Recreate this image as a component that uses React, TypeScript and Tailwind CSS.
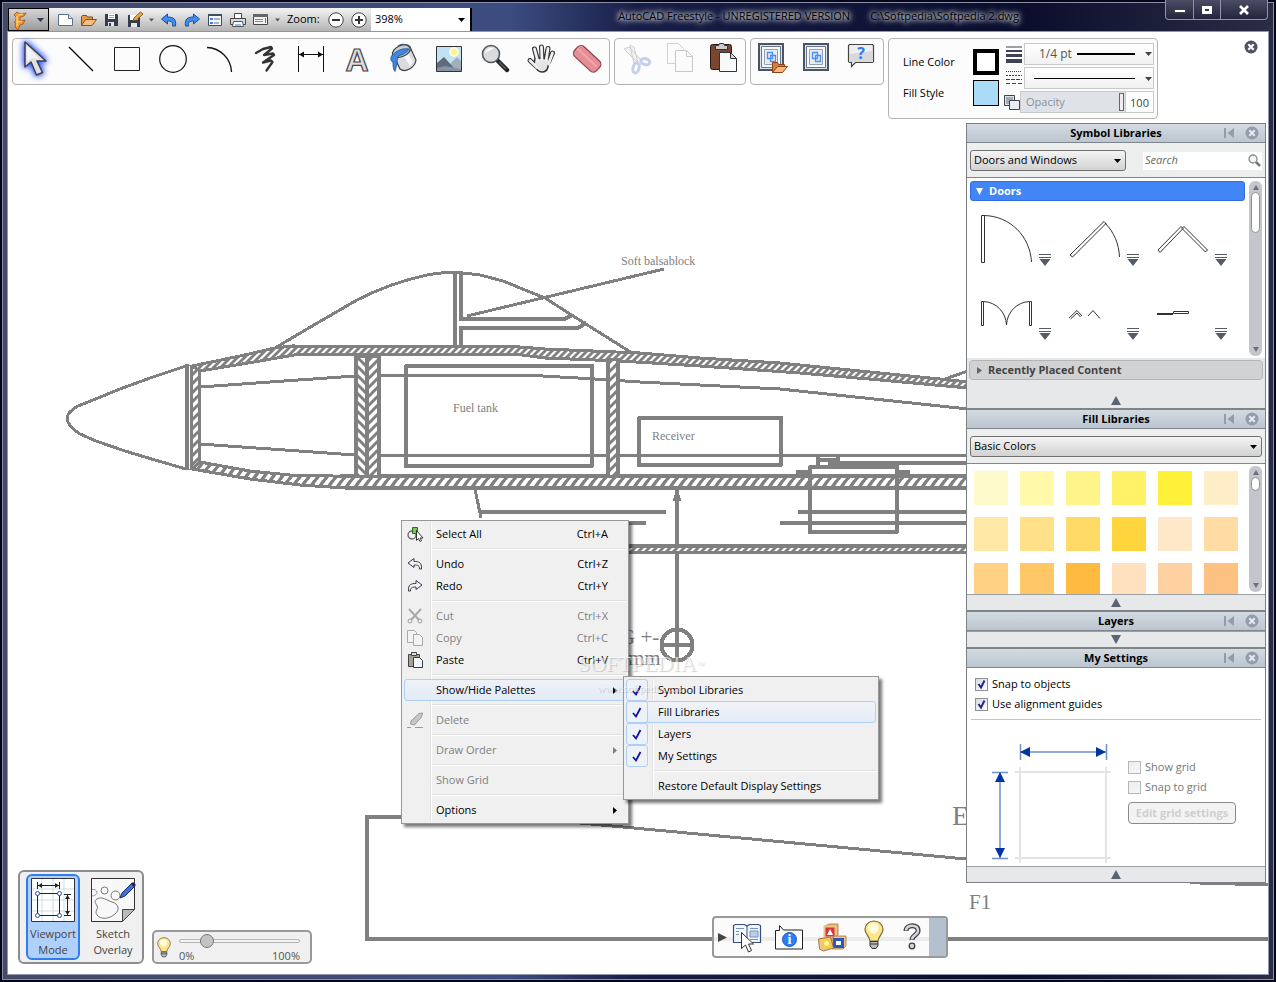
import type { ReactNode } from 'react';

const GRAY = '#808080';

type IconProps = { children: ReactNode; w?: number; h?: number };

function Svg({ children, w = 36, h = 36 }: IconProps) {
  return (
    <svg width={w} height={h} viewBox={`0 0 ${w} ${h}`} fill="none" className="shrink-0 overflow-visible" aria-hidden="true">
      {children}
    </svg>
  );
}

function Caret({ className = 'text-black' }: { className?: string }) {
  return (
    <svg width="7" height="4" viewBox="0 0 7 4" className={className} aria-hidden="true">
      <path d="M0 0h7L3.5 4z" fill="currentColor" />
    </svg>
  );
}

/* ---------- Quick access icons ---------- */

const quickIcons = {
  New: (
    <Svg w={18} h={16}>
      <path d="M1.500 2.500h10l4 4v7h-14z" fill="#fff" stroke="#5b6f88" />
      <path d="M11.500 2.500v4h4" stroke="#5b6f88" fill="#dfe8f2" />
    </Svg>
  ),
  Open: (
    <Svg w={18} h={16}>
      <path d="M1.500 13.500v-9l1-1h4l1 1.500h5v3" fill="#e79a4b" stroke="#7a4a2c" />
      <path d="M1.500 13.500l4-6h11l-4.500 6z" fill="#f6bd83" stroke="#8a4f26" />
    </Svg>
  ),
  Save: (
    <Svg w={18} h={16}>
      <path d="M2 2h12l1 1v11H2z" fill="#333d4c" />
      <path d="M5 2h7v5H5z" fill="#fff" />
      <path d="M6 3.500h5M6 5.500h5" stroke="#98a4b3" />
      <path d="M5 10h6v4H5z" fill="#e6eaf0" />
      <path d="M6 11h2v3H6z" fill="#333d4c" />
    </Svg>
  ),
  'Save As': (
    <Svg w={18} h={16}>
      <path d="M2 3h12v12H2z" fill="#333d4c" />
      <path d="M4 3h8v5H4z" fill="#fff" />
      <path d="M5 11h6v4H5z" fill="#e6eaf0" />
      <path d="M7 9l1-3 6.500-6L17 2l-6.500 6z" fill="#f3a83c" stroke="#5e4423" strokeWidth=".8" />
    </Svg>
  ),
  Undo: (
    <Svg w={18} h={16}>
      <path d="M1.500 7l6-5v3c6 0 9 2 8 9h-3c.5-4-1-5-5-5v3z" fill="#3f8df0" stroke="#1f4e9b" strokeLinejoin="round" />
    </Svg>
  ),
  Redo: (
    <Svg w={18} h={16}>
      <path d="M16.500 7l-6-5v3c-6 0-9 2-8 9h3c-.5-4 1-5 5-5v3z" fill="#3f8df0" stroke="#1f4e9b" strokeLinejoin="round" />
    </Svg>
  ),
  Properties: (
    <Svg w={18} h={16}>
      <path d="M2.500 2.500h13v11h-13z" fill="#f4f7fa" stroke="#3d4d61" />
      <path d="M2 2h14v2H2z" fill="#3d4d61" />
      <path d="M4 6h3v2H4zM4 10h3v2H4z" fill="#3f7fe0" />
      <path d="M8 7h6M8 11h5" stroke="#5f7085" />
    </Svg>
  ),
  Print: (
    <Svg w={18} h={16}>
      <path d="M5.500 1.500h7v5h-7z" fill="#fff" stroke="#444" />
      <path d="M1.500 6.500h15v6h-15z" fill="#d8dadd" stroke="#444" />
      <path d="M4.500 9.500h9l1 5h-11z" fill="#fff" stroke="#555" />
      <path d="M6 12h6v2H6z" fill="#8fc1f3" />
    </Svg>
  ),
  Layout: (
    <Svg w={18} h={16}>
      <path d="M1.500 2.500h14v10h-14z" fill="#f0f1f2" stroke="#444" />
      <path d="M1 2h15v3H1z" fill="#666" />
      <path d="M3 7.500h8M3 9.500h8" stroke="#8a8a8a" />
      <path d="M13 6h1v5h-1z" fill="#777" />
    </Svg>
  ),
};

/* ---------- Drawing tool icons ---------- */

const drawTools: { name: string; icon: ReactNode }[] = [
  {
    name: 'Select',
    icon: (
      <Svg>
        <g className="[filter:drop-shadow(0_0_3px_#2f55ff)_drop-shadow(0_0_2px_#6f8cff)]">
          <path d="M8 1v25l6-5 5.500 13 6-2.500L20 20h9z" fill="#dfe0e5" stroke="#3d3f4a" strokeWidth="1.500" strokeLinejoin="round" />
        </g>
        <path d="M10 5v16l5-4 7 1z" fill="#f4f4f7" />
      </Svg>
    ),
  },
  { name: 'Line', icon: <Svg><path d="M6 6l24 24" stroke="#000" strokeWidth="1.300" /></Svg> },
  { name: 'Rectangle', icon: <Svg><path d="M5.500 6.500h25v23h-25z" stroke="#222" /></Svg> },
  { name: 'Circle', icon: <Svg><circle cx="18" cy="18" r="13.300" stroke="#111" strokeWidth="1.200" /></Svg> },
  { name: 'Arc', icon: <Svg><path d="M6 6.500C19 7 30 17 30.500 31" stroke="#111" strokeWidth="1.300" /></Svg> },
  {
    name: 'Freehand',
    icon: (
      <Svg>
        <path d="M9 12L16 8 24 6 25 7.500 17 14 26 12.500 27 14 16 21.500 24 19.500 25.500 21 19.500 29.500" stroke="#333" strokeWidth="2.400" strokeLinecap="round" strokeLinejoin="round" />
      </Svg>
    ),
  },
  {
    name: 'Dimension',
    icon: (
      <Svg>
        <path d="M5.500 5v26M30.500 5v26M6 13.500h24" stroke="#111" />
        <path d="M6 13.500l5-3v6zM30 13.500l-5-3v6z" fill="#111" />
      </Svg>
    ),
  },
  {
    name: 'Text',
    icon: (
      <Svg>
        <text x="18" y="29.500" textAnchor="middle" className="font-['Liberation_Sans',sans-serif] text-[32px] font-bold" fill="#dcdcdf" stroke="#454548" strokeWidth="1.200">
          A
        </text>
      </Svg>
    ),
  },
  {
    name: 'Fill',
    icon: (
      <Svg>
        <path d="M8 13l7 15c5 4 15-1 16-9L25 6z" fill="#d9dbdf" stroke="#3b3b40" strokeWidth="1.200" />
        <path d="M22 11l6 10-3 4-7-11z" fill="#f8f8fa" />
        <ellipse cx="16.500" cy="10" rx="9.500" ry="5.500" transform="rotate(-24 16.500 10)" fill="#c3cedc" stroke="#3b3b40" strokeWidth="1.200" />
        <path d="M8.500 13c4-4 10-6 15.500-5-2 4-7 6-11 7-1 4-1 10-3 15.500-2-2-2-6-2-9-3-2-3-6 .5-8.500z" fill="#3f86dc" stroke="#1f4f96" strokeWidth=".8" />
        <path d="M13 5c4-3 11-2 13 4" stroke="#55565a" strokeWidth="1.200" />
      </Svg>
    ),
  },
  {
    name: 'Image',
    icon: (
      <Svg>
        <path d="M5.500 5.500h25v25h-25z" fill="#bfe3f2" stroke="#333" />
        <circle cx="23" cy="11" r="5" fill="#fdfbd8" />
        <circle cx="23" cy="11" r="3" fill="#fff38f" />
        <path d="M20 22l6-6 4 4v10H17z" fill="#a3aebb" />
        <path d="M6 22l7-6 10 11v3H6z" fill="#5f6b7b" />
        <path d="M6 27l8-2 16 3v2H6z" fill="#8793a3" />
      </Svg>
    ),
  },
  {
    name: 'Zoom',
    icon: (
      <Svg>
        <path d="M21 20l9 9" stroke="#222" strokeWidth="4.500" strokeLinecap="round" />
        <path d="M22 21l7 7" stroke="#5b6068" strokeWidth="1.500" />
        <circle cx="14" cy="13" r="8.500" fill="#d9dcdf" stroke="#55585d" strokeWidth="1.600" />
        <path d="M8 12c1-4 5-6 9-5-2 1-6 3-9 5z" fill="#fff" />
      </Svg>
    ),
  },
  {
    name: 'Pan',
    icon: (
      <Svg>
        <g strokeLinecap="round" strokeLinejoin="round">
          <path d="M11.500 8l3 11M18.500 6l.5 12M25 7.500l-2 11M29.500 12l-4 9M7 19.500l6 5.500" stroke="#333" strokeWidth="5" />
          <path d="M12 17l14 1-1 8c-1 4-3 5-6 5-4 0-6-3-8-7z" fill="#e4e4e8" stroke="#333" strokeWidth="1.500" />
          <path d="M11.500 8l3.500 13M18.500 6l.5 14M25 7.500l-2 13M29.500 12l-4 11M7 19.500l7 7" stroke="#f0f0f2" strokeWidth="2.800" />
          <path d="M15 20h9l-1 6-5 2-4-3z" fill="#e4e4e8" />
        </g>
      </Svg>
    ),
  },
  {
    name: 'Eraser',
    icon: (
      <Svg>
        <rect x="3" y="11" width="30" height="13.500" rx="4.500" transform="rotate(43 18 18)" fill="#e68e96" stroke="#8d3f49" strokeWidth="1.200" />
        <path d="M9 8l18 17" stroke="#efa6ac" strokeWidth="2" strokeLinecap="round" />
      </Svg>
    ),
  },
];

const clipboardTools: { name: string; icon: ReactNode; disabled?: boolean }[] = [
  {
    name: 'Cut',
    disabled: true,
    icon: (
      <Svg>
        <path d="M6 8l5-2 14 15-3 3zM12 4l4 2 4 16-4 1z" fill="#f2f2f3" stroke="#cfcfd2" />
        <g stroke="#c3d0ec" strokeWidth="3" fill="#fff">
          <ellipse cx="18" cy="27" rx="3" ry="5" transform="rotate(15 18 27)" />
          <ellipse cx="27.500" cy="20.500" rx="4.500" ry="3" transform="rotate(15 27 20)" />
        </g>
      </Svg>
    ),
  },
  {
    name: 'Copy',
    disabled: true,
    icon: (
      <Svg>
        <path d="M5.500 2.500h11l5 5v15h-16z" fill="#fbfbfb" stroke="#d0d0d2" />
        <path d="M13.500 9.500h11l6 6v15h-17z" fill="#fbfbfb" stroke="#c8c8ca" />
        <path d="M24.500 9.500v6h6" stroke="#c8c8ca" />
      </Svg>
    ),
  },
  {
    name: 'Paste',
    icon: (
      <Svg>
        <rect x="4.500" y="3.500" width="21" height="25" rx="2" fill="#7a4630" stroke="#2d1a12" />
        <path d="M9.500 8.500v-4h3l1-2h4l1 2h3v4z" fill="#c9ccd0" stroke="#333" />
        <path d="M13.500 11.500h11l6 6v13h-17z" fill="#f8f9fb" stroke="#333" />
        <path d="M24.500 11.500v6h6z" fill="#d3d8e0" stroke="#333" />
      </Svg>
    ),
  },
];

function FrameArt() {
  return (
    <>
      <path d="M5 2h26v28H5z" fill="#4b5462" />
      <path d="M7 4h22v24H7z" fill="#dde3ea" />
      <path d="M8.500 5.500h19v21h-19z" fill="#f5f7f9" stroke="#69788c" />
      <path d="M11.500 8.500h13v15h-13z" fill="#e9edf3" stroke="#93a0b2" />
      <path d="M14.500 11.500h5v6h-5zM17.500 14.500h5v6h-5z" stroke="#4a8df5" strokeWidth="1.300" />
    </>
  );
}

const shareTools: { name: string; icon: ReactNode }[] = [
  {
    name: 'Open from gallery',
    icon: (
      <Svg>
        <FrameArt />
        <path d="M19.500 31.500v-10h5l1 2h6v3" fill="#d97f35" stroke="#8a431b" />
        <path d="M19.500 31.500l5-6h10l-5 6z" fill="#f7b77b" stroke="#8a431b" />
      </Svg>
    ),
  },
  { name: 'Gallery', icon: <Svg><FrameArt /></Svg> },
  {
    name: 'Help',
    icon: (
      <Svg>
        <path d="M6.500 3.500h23l1 1v16l-1 1h-17l-4 4v-4h-2l-1-1v-16z" fill="#eeeef2" stroke="#444" strokeWidth="1.200" />
        <path d="M6 13l24-3v11H6z" fill="#d7d7de" />
        <text x="18" y="18" textAnchor="middle" className="font-['Open_Sans',sans-serif] text-[16px] font-bold" fill="#2f7df0">
          ?
        </text>
      </Svg>
    ),
  },
];

/* ---------- Title bar ---------- */

function QuickButton({ name }: { name: keyof typeof quickIcons }) {
  return (
    <button type="button" aria-label={name} className="flex h-full w-[23px] items-center justify-center">
      {quickIcons[name]}
    </button>
  );
}

function TitleBar() {
  return (
    <header className="flex h-8 items-end">
      {/* Quick access */}
      <div className="flex h-6 w-[464px] items-center border-r-2 border-b border-black bg-linear-to-b from-[#f4f4f4] to-[#b4b4b4]">
        <button type="button" aria-label="Application menu" className="mr-[5px] flex h-full w-[41px] items-center justify-between border border-black bg-linear-to-b from-[#d5d5d5] to-[#9c9c9c] pr-1 pl-1">
          <Svg w={16} h={20}>
            <path d="M1 5l3-3 3 2 6-1-2 3-4 1v4l5-1-2 4-3 1-2 5-3-3 1-4-2-1 2-2V7z" fill="#f39a2d" stroke="#a84b12" strokeWidth=".8" />
            <path d="M5 5l5-1M5 12l4-1M4 6v10" stroke="#ffe08a" strokeWidth="1.200" />
          </Svg>
          <Caret className="text-[#333f4f]" />
        </button>
        <QuickButton name="New" />
        <QuickButton name="Open" />
        <QuickButton name="Save" />
        <QuickButton name="Save As" />
        <button type="button" aria-label="Save options" className="flex h-full w-[11px] items-center justify-center">
          <Caret className="w-[5px] text-[#555]" />
        </button>
        <QuickButton name="Undo" />
        <QuickButton name="Redo" />
        <QuickButton name="Properties" />
        <QuickButton name="Print" />
        <QuickButton name="Layout" />
        <button type="button" aria-label="Customize" className="flex h-full w-[11px] items-center justify-center">
          <Caret className="w-[5px] text-[#555]" />
        </button>
        <label htmlFor="zoom" className="ml-1 w-[37px]">
          Zoom:
        </label>
        <button type="button" aria-label="Zoom out" className="flex w-[23px] justify-center">
          <Svg w={16} h={16}>
            <circle cx="8" cy="8" r="7.200" fill="#fbfbfb" stroke="#444" />
            <path d="M4 8h8" stroke="#333" strokeWidth="2" />
          </Svg>
        </button>
        <button type="button" aria-label="Zoom in" className="flex w-[23px] justify-center">
          <Svg w={16} h={16}>
            <circle cx="8" cy="8" r="7.200" fill="#fbfbfb" stroke="#444" />
            <path d="M4 8h8M8 4v8" stroke="#333" strokeWidth="2" />
          </Svg>
        </button>
        <div className="relative ml-px h-full flex-1">
          <select id="zoom" className="h-full w-full appearance-none bg-white px-1">
            <option>398%</option>
          </select>
          <Caret className="pointer-events-none absolute top-2.5 right-[5px] text-black" />
        </div>
      </div>
      {/* Title */}
      <h1 className="flex h-8 flex-1 items-center justify-center gap-5 whitespace-pre [text-shadow:0_0_4px_#ffffff,0_0_6px_#ffffffc0,0_0_10px_#ffffffa0]">
        <span>AutoCAD Freestyle - UNREGISTERED VERSION</span>
        <span>C:\Softpedia\Softpedia 2.dwg</span>
      </h1>
      {/* Window controls */}
      <div className="flex h-5 self-start rounded-b border border-t-0 border-[#8f94a8] bg-linear-to-b from-[#4a4d63] to-[#22253b]">
        <button type="button" aria-label="Minimize" className="flex w-7 items-center justify-center border-r border-[#8f94a8]">
          <Svg w={12} h={6}>
            <path d="M.5 2.500h11v3H.5z" fill="#fff" stroke="#444" />
          </Svg>
        </button>
        <button type="button" aria-label="Maximize" className="flex w-[27px] items-center justify-center border-r border-[#8f94a8]">
          <Svg w={12} h={10}>
            <path d="M2.500 2.500h7v5h-7z" stroke="#fff" strokeWidth="3" />
          </Svg>
        </button>
        <button type="button" aria-label="Close" className="flex w-[46px] items-center justify-center">
          <Svg w={12} h={10}>
            <path d="M2 1l8 8M10 1L2 9" stroke="#fff" strokeWidth="2.600" />
          </Svg>
        </button>
      </div>
    </header>
  );
}

/* ---------- Toolbars ---------- */

function ToolPanel({ tools, className }: { tools: { name: string; icon: ReactNode; disabled?: boolean }[]; className: string }) {
  return (
    <div className={`flex h-[47px] justify-between rounded border border-[#b3b3b3] bg-[#fcfcfc] pt-0.5 ${className}`}>
      {tools.map((tool) => (
        <button key={tool.name} type="button" aria-label={tool.name} disabled={tool.disabled} className="flex w-9 items-start">
          {tool.icon}
        </button>
      ))}
    </div>
  );
}

function StylePanel() {
  return (
    <div className="flex h-[81px] w-[270px] rounded border border-[#b3b3b3] bg-[#fcfcfc] pr-[3px] pl-3.5">
      {/* Labels */}
      <div className="flex w-[70px] flex-col justify-center gap-[15px] pb-0.5">
        <span id="line-color">Line Color</span>
        <span id="fill-style">Fill Style</span>
      </div>
      {/* Swatches */}
      <div className="flex w-8 flex-col gap-[5px] pt-2.5">
        <button type="button" aria-labelledby="line-color" className="size-[26px] border-4 border-black bg-white" />
        <button type="button" aria-labelledby="fill-style" className="size-[26px] border border-black bg-[#abdcf7]" />
      </div>
      {/* Stroke settings */}
      <div className="flex flex-1 flex-col gap-0.5 pt-1">
        <div className="flex items-center gap-0.5">
          <Svg w={17} h={18}>
            <path d="M1 2h16" stroke="#3d4350" />
            <path d="M1 6h16" stroke="#3d4350" strokeWidth="2" />
            <path d="M1 10.500h16" stroke="#3d4350" strokeWidth="3" />
            <path d="M1 16h16" stroke="#3d4350" strokeWidth="4" />
          </Svg>
          <div className="relative flex-1">
            <select aria-label="Line weight" className="block h-[22px] w-full appearance-none border border-[#c9c9c9] bg-linear-to-b from-white to-[#f1f1f1] px-3.5 text-xs text-[#555]">
              <option>1/4 pt</option>
            </select>
            <span className="pointer-events-none absolute top-2.5 right-[19px] h-0.5 w-[58px] bg-black" />
            <Caret className="pointer-events-none absolute top-[9px] right-0.5 text-[#444]" />
          </div>
        </div>
        <div className="flex items-center gap-0.5">
          <Svg w={17} h={18}>
            <path d="M1 2.500h16" stroke="#3d4350" strokeDasharray="1 1" />
            <path d="M1 6.500h16" stroke="#3d4350" strokeDasharray="2 1" />
            <path d="M1 10.500h16" stroke="#3d4350" strokeDasharray="4 1" />
            <path d="M1 14.500h16" stroke="#3d4350" strokeDasharray="4 2" />
          </Svg>
          <div className="relative flex-1">
            <select aria-label="Line type" className="block h-[22px] w-full appearance-none border border-[#c9c9c9] bg-linear-to-b from-white to-[#f1f1f1]">
              <option aria-label="Solid" />
            </select>
            <span className="pointer-events-none absolute top-[11px] right-[19px] h-px w-[101px] bg-black" />
            <Caret className="pointer-events-none absolute top-2.5 right-0.5 text-[#444]" />
          </div>
        </div>
        <div className="flex items-center">
          <Svg w={15} h={18}>
            <path d="M-.5 2.500h10v10h-10z" fill="#dfe3e8" stroke="#3d4350" />
            <path d="M1 4h7v7H1z" fill="#a3abb5" />
            <path d="M4.500 7.500h10v9h-10z" fill="#e9eef4" stroke="#3d4350" />
          </Svg>
          <button type="button" className="flex h-[22px] flex-1 items-center justify-between border border-[#c9c9c9] bg-[#dfe3e8] pl-[5px] text-[#8b9098]">
            Opacity
            <span className="mr-px h-[18px] w-[5px] border border-[#666] bg-[#eee]" />
          </button>
          <input aria-label="Opacity value" defaultValue="100" className="h-[22px] w-7 border border-l-0 border-[#c9c9c9] bg-white text-center text-[#444]" />
        </div>
      </div>
    </div>
  );
}

/* ---------- Drawing ---------- */

const upperSkin =
  'M192 366L240 356 275 348 292 346 520 347 545 349 640 353 700 358 780 363 860 371 950 380 968 382V388L880 380 800 373 700 366 620 361 545 358 515 354H300L260 361 200 371z';
const lowerSkin = 'M200 462L250 471 290 475 333 476H968V488H345L300 485 250 479 192 469z';

function Drawing() {
  return (
    <svg className="pointer-events-none absolute inset-0 h-full w-full" aria-hidden="true">
      <defs>
        <pattern id="hatch-fine" width="7" height="7" patternUnits="userSpaceOnUse">
          <rect width="7" height="7" fill="#fff" />
          <path d="M-2 9L9 -2M-2 2L2 -2M5 9L9 5" stroke={GRAY} strokeWidth="2.800" />
        </pattern>
        <pattern id="hatch-post" width="9" height="9" patternUnits="userSpaceOnUse">
          <rect width="9" height="9" fill="#fff" />
          <path d="M-2 11L11 -2M-2 2L2 -2M7 11L11 7" stroke={GRAY} strokeWidth="3" />
        </pattern>
        <pattern id="hatch-back" width="9" height="9" patternUnits="userSpaceOnUse">
          <rect width="9" height="9" fill="#fff" />
          <path d="M-2 -2L11 11M-2 7L2 11M7 -2L11 2" stroke={GRAY} strokeWidth="3" />
        </pattern>
        <pattern id="hatch-wide" width="9" height="12" patternUnits="userSpaceOnUse">
          <rect width="9" height="12" fill="#fff" />
          <path d="M-9 13L1 -1M0 13L10 -1M9 13L19 -1" stroke={GRAY} strokeWidth="3.400" />
        </pattern>
      </defs>
      <g transform="translate(-8 -32)" stroke={GRAY} strokeWidth="3" fill="none" shapeRendering="crispEdges">
        {/* Nose cone */}
        <path d="M186 366L150 378 120 389 98 398 78 406Q67 412 67 419 68 426 80 434L96 441 125 451 155 460 186 469" />
        <path d="M186.500 364v106" strokeWidth="4" />
        <path d="M191.500 366h7.500v102h-7.500z" fill="url(#hatch-post)" />
        {/* Skins */}
        <path d={upperSkin} fill="url(#hatch-fine)" />
        <path d={lowerSkin} fill="url(#hatch-wide)" />
        <path d="M340 476H968M345 488H968" strokeWidth="4" />
        {/* Longerons */}
        <path d="M200 387L355 376M367 375H525L560 377 595 379 640 382 780 389 968 409M200 444L355 455M367 455H968" />
        {/* Bulkheads */}
        <path d="M356 356h11v120h-11z" fill="url(#hatch-back)" />
        <path d="M367 356h12v120h-12z" fill="url(#hatch-post)" />
        <path d="M608 359h10v117h-10z" fill="url(#hatch-post)" />
        <path d="M356 356v120M367 356v120M379 356v120M608 358v118M618 358v118" strokeWidth="4" />
        {/* Canopy */}
        <path d="M275 348L307 329 357 300Q390 283 427 275 450 270 480 275L503 281 530 292 545 298 570 314 632 353" />
        <path d="M454.500 272v76M460.500 273v46h104l8-4M460.500 348v-20h117l9-5" strokeWidth="4" />
        <path d="M467 316L664 269" />
        <path d="M945 379L968 371" />
        {/* Boxes */}
        <g strokeWidth="4">
          <path d="M406 366h186v100H406zM639 418h142v47H639zM810 467h87v65h-87z" strokeLinejoin="round" />
          <path d="M828 463h140M818 457v10M818 460h22M838 457v6M796 472h14M898 472h12" />
          {/* Gear and wing lines */}
          <path d="M480 512h186M798 512h170M560 523h86M780 523h188M677 489v173M660 645h34" />
          <circle cx="677" cy="645" r="15.500" />
          {/* Tail template */}
          <path d="M402 817h-35v122H1270" />
        </g>
        <path d="M475 489L481 518M677 493L674 501M677 493L680 501" />
        <path d="M580 823L966 859 1200 883 1270 885" />
        <path d="M560 549H968" strokeWidth="10" />
        <path d="M626 548h342v3H626z" fill="url(#hatch-fine)" stroke="none" />
      </g>
      <g fill={GRAY} transform="translate(-8 -32)" className="font-['Liberation_Serif',serif]">
        <g className="text-xs">
          <text x="621" y="265">Soft balsablock</text>
          <text x="453" y="412">Fuel tank</text>
          <text x="652" y="440">Receiver</text>
        </g>
        <g className="text-[21px]">
          <text x="620" y="644">G +-</text>
          <text x="628" y="665">mm</text>
          <text x="969" y="909">F1</text>
        </g>
        <text x="952" y="825" className="text-[28px]">E</text>
      </g>
    </svg>
  );
}

/* ---------- Palettes ---------- */

function CloseDot({ color, cross }: { color: string; cross: string }) {
  return (
    <Svg w={14} h={14}>
      <circle cx="7" cy="7" r="6.500" fill={color} />
      <path d="M4.300 4.300l5.400 5.400M9.700 4.300L4.300 9.700" stroke={cross} strokeWidth="2.200" />
    </Svg>
  );
}

function PaletteHeader({ title }: { title: string }) {
  return (
    <div className="relative flex h-[19px] items-center justify-center border-b border-[#7f868d] bg-linear-to-b from-[#d3dae2] to-[#bcc6d0]">
      <h2 className="font-bold text-black">{title}</h2>
      <div className="absolute right-1.5 flex items-center gap-[11px]">
        <button type="button" aria-label={`Collapse ${title}`}>
          <Svg w={10} h={10}>
            <path d="M0 0h2v10H0zM10 0v10L3.500 5z" fill="#949cac" />
          </Svg>
        </button>
        <button type="button" aria-label={`Close ${title}`}>
          <CloseDot color="#949cac" cross="#e3e8ed" />
        </button>
      </div>
    </div>
  );
}

function PaletteFooter({ open = true, label }: { open?: boolean; label: string }) {
  return (
    <button type="button" aria-label={label} className="flex h-4 w-full items-center justify-center border-t border-[#9aa0a6] bg-[#e6e8ea]">
      <Svg w={10} h={9}>
        <path d={open ? 'M5 0l5 9H0z' : 'M5 9l5-9H0z'} fill="#5c6373" />
      </Svg>
    </button>
  );
}

function Scrollbar({ thumb }: { thumb: string }) {
  return (
    <div className="flex w-[13px] flex-col items-center rounded-md bg-[#c5c6cc] py-1">
      <Svg w={6} h={5}>
        <path d="M3 0l3 5H0z" fill="#6b7080" />
      </Svg>
      <div className={`mt-0.5 w-[9px] rounded-md border border-[#8b8e9a] bg-white ${thumb}`} />
      <div className="mt-auto">
        <Svg w={6} h={5}>
          <path d="M3 5l3-5H0z" fill="#6b7080" />
        </Svg>
      </div>
    </div>
  );
}

function PaletteSelect({ label, value, className }: { label: string; value: string; className: string }) {
  return (
    <div className={`relative ${className}`}>
      <select aria-label={label} className="block h-[21px] w-full appearance-none rounded-[3px] border border-[#707070] bg-linear-to-b from-[#f4f4f4] to-[#d2d2d2] px-[3px]">
        <option>{value}</option>
      </select>
      <Caret className="pointer-events-none absolute top-[9px] right-[5px] text-black" />
    </div>
  );
}

const doors: { name: string; art: ReactNode }[] = [
  { name: 'Single door', art: <><path d="M5.500 13.500h3v47h-3z" /><path d="M8 13.500C34 14 54 34 55.500 60" /></> },
  { name: 'Single door 45', art: <><path d="M6 53L40 19.500l2 2L8.500 55z" /><path d="M41 21C50 30 55 42 55.500 55" /></> },
  { name: 'Bifold door', art: <path d="M6 48L29 24.500l2 2L8 50.500zM30 26.500L32 24.500 55.500 48l-2 2z" /> },
  { name: 'Double door', art: <path d="M5.500 25.500h2v24h-2zM53.500 25.500h2v24h-2zM7.500 25.500C20 26 30 36 30.500 49 31 36 41 26 53.500 25.500" /> },
  { name: 'Double bifold door', art: <path d="M5 42l8-7.500 5 5.500M6.500 43l6.500-6 3.500 4M24 40l5-5.500 7 8" /> },
  { name: 'Sliding door', art: <><path d="M5 38h16" strokeWidth="2" /><path d="M21.500 35.500h15v2h-15z" /></> },
];

function SymbolLibraries() {
  return (
    <section>
      <PaletteHeader title="Symbol Libraries" />
      <div className="flex h-[35px] items-center justify-between border-b border-[#7f868d] bg-[#edefef] px-[3px] pt-px">
        <PaletteSelect label="Symbol library" value="Doors and Windows" className="w-[156px]" />
        <div className="flex h-[18px] w-[119px] items-center bg-white pr-px">
          <input type="search" aria-label="Search" placeholder="Search" className="w-full min-w-0 pl-0.5 italic outline-none placeholder:text-[#666]" />
          <Svg w={13} h={13}>
            <circle cx="5" cy="5" r="4" stroke="#8b8b8b" strokeWidth="1.300" fill="#f4f4f4" />
            <path d="M8 8l4 4" stroke="#777" strokeWidth="2.500" />
          </Svg>
        </div>
      </div>
      <div className="flex h-[180px] justify-between bg-white pt-[3px] pr-[3px] pb-0.5 pl-[3px]">
        <div>
          <button type="button" className="flex h-5 w-[275px] items-center gap-1.5 rounded-[3px] border border-[#2f6de0] bg-[#4285f6] px-[5px] font-bold text-white">
            <svg width="7" height="7" viewBox="0 0 7 7" aria-hidden="true">
              <path d="M0 0h7L3.500 7z" fill="#fff" />
            </svg>
            Doors
          </button>
          <div className="grid grid-cols-[repeat(3,88px)] pt-px pl-1.5">
            {doors.map((door) => (
              <button key={door.name} type="button" aria-label={door.name} className="h-[74px]">
                <Svg w={80} h={74}>
                  <g stroke="#333">{door.art}</g>
                  <path d="M63 52h12v1H63zM63 55h12v1H63zM63.500 57h11L69 64z" fill="#555a68" />
                </Svg>
              </button>
            ))}
          </div>
        </div>
        <Scrollbar thumb="h-[41px]" />
      </div>
      <div className="flex h-[50px] flex-col items-center justify-between bg-[#e6e8ea] px-0.5 pt-0.5">
        <button type="button" className="flex h-5 w-full items-center gap-1.5 rounded border border-[#b5b5b5] bg-[#d1d2d3] px-[7px] font-bold text-[#444]">
          <Svg w={5} h={7}>
            <path d="M0 0l5 3.500L0 7z" fill="#666" />
          </Svg>
          Recently Placed Content
        </button>
        <button type="button" aria-label="Collapse symbols" className="mb-[3px]">
          <Svg w={10} h={9}>
            <path d="M5 0l5 9H0z" fill="#5c6373" />
          </Svg>
        </button>
      </div>
    </section>
  );
}

const swatches = [
  'bg-[#fffacb]', 'bg-[#fff9a9]', 'bg-[#fff48a]', 'bg-[#fff268]', 'bg-[#fff13a]', 'bg-[#ffeec8]',
  'bg-[#ffe8a6]', 'bg-[#ffe18a]', 'bg-[#ffda66]', 'bg-[#ffd43c]', 'bg-[#ffe8c8]', 'bg-[#ffdca3]',
  'bg-[#ffd184]', 'bg-[#ffc766]', 'bg-[#febb40]', 'bg-[#ffe0bf]', 'bg-[#ffd0a0]', 'bg-[#fdc282]',
];

function FillLibraries() {
  return (
    <section className="border-t-2 border-[#808489]">
      <PaletteHeader title="Fill Libraries" />
      <div className="flex h-[35px] items-center border-b border-[#7f868d] bg-[#edefef] px-[3px]">
        <PaletteSelect label="Fill library" value="Basic Colors" className="w-full" />
      </div>
      <div className="flex h-[130px] justify-between bg-white pr-[3px] pl-[7px]">
        <div className="grid grid-cols-6 content-start gap-3 overflow-hidden pt-[7px]">
          {swatches.map((color, index) => (
            <button key={color} type="button" aria-label={`Color ${index + 1}`} className={`size-[34px] ${color}`} />
          ))}
        </div>
        <div className="flex py-0.5">
          <Scrollbar thumb="h-[14px]" />
        </div>
      </div>
      <PaletteFooter label="Collapse fills" />
    </section>
  );
}

function CheckRow({ id, label, checked = false, disabled = false }: { id: string; label: string; checked?: boolean; disabled?: boolean }) {
  return (
    <div className={`flex h-5 items-center gap-1 ${disabled ? 'text-[#777]' : ''}`}>
      <span className="relative flex">
        <input id={id} type="checkbox" defaultChecked={checked} disabled={disabled} className="peer size-[13px] appearance-none border border-[#8e8f8f] bg-linear-to-br from-[#d8dbe0] to-white disabled:border-[#b5b8bb] disabled:from-[#eeeeee] disabled:to-[#f6f6f6]" />
        <svg width="13" height="13" viewBox="0 0 13 13" fill="none" className="pointer-events-none invisible absolute inset-0 peer-checked:visible" aria-hidden="true">
          <path d="M3.500 6l2.500 3.500L9.500 2.500" stroke="#1f2a8c" strokeWidth="2" />
        </svg>
      </span>
      <label htmlFor={id}>{label}</label>
    </div>
  );
}

function MySettings() {
  return (
    <section className="border-t-2 border-[#808489] bg-white">
      <PaletteHeader title="My Settings" />
      <div className="px-1">
        <div className="flex h-[52px] flex-col border-b border-[#c4c4c4] px-1 pt-1.5">
          <CheckRow id="snap-objects" label="Snap to objects" checked />
          <CheckRow id="snap-guides" label="Use alignment guides" checked />
        </div>
        <div className="flex h-[146px] pl-5">
          <svg width="137" height="146" viewBox="0 0 137 146" fill="none" className="shrink-0" aria-hidden="true">
            <path d="M29 47v96M115 47v96M24 52h96M24 138h96" stroke="#e4e4e4" strokeWidth="2" />
            <path d="M29.500 24v16M115.500 24v16M29 32h86M1 52.500h16M1 138.500h16M9 52v86" stroke="#6f8fce" strokeWidth="1.500" />
            <path d="M29 32l10-5v10zM115 32l-10-5v10zM9 52l-5 10h10zM9 138l-5-10h10z" fill="#0034a3" />
          </svg>
          <div className="flex flex-col items-start pt-[37px]">
            <CheckRow id="show-grid" label="Show grid" disabled />
            <CheckRow id="snap-grid" label="Snap to grid" disabled />
            <button type="button" disabled className="mt-[5px] h-[22px] w-[108px] rounded border border-[#8a8a8a] bg-[#f3f3f3] font-bold whitespace-nowrap text-[#cfcfcf]">
              Edit grid settings
            </button>
          </div>
        </div>
      </div>
      <PaletteFooter label="Collapse settings" />
    </section>
  );
}

function Palettes() {
  return (
    <aside className="absolute top-[91px] right-0.5 w-[300px] border border-[#7c8085]">
      <SymbolLibraries />
      <FillLibraries />
      <section className="border-t-2 border-[#808489]">
        <PaletteHeader title="Layers" />
        <PaletteFooter open={false} label="Expand layers" />
      </section>
      <MySettings />
    </aside>
  );
}

/* ---------- Context menu ---------- */

type MenuItem = { label: string; keys?: string; disabled?: boolean; sub?: boolean; active?: boolean; icon?: ReactNode };

const menuGroups: MenuItem[][] = [
  [
    {
      label: 'Select All',
      keys: 'Ctrl+A',
      icon: (
        <Svg w={16} h={16}>
          <circle cx="5" cy="9" r="4" stroke="#666" strokeWidth="1.300" />
          <path d="M5.500 1.500h5v6h-5z" fill="#7dc55b" stroke="#2e6b1c" />
          <path d="M9.500 4.500v10l2-2 1.500 3 1.500-.8-1.500-2.700h3z" fill="#fff" stroke="#222" strokeWidth=".9" />
        </Svg>
      ),
    },
  ],
  [
    {
      label: 'Undo',
      keys: 'Ctrl+Z',
      icon: (
        <Svg w={16} h={16}>
          <path d="M1 7l6-4.500v3c5 0 8 1 7.500 7.500h-2C12.500 9.500 11 9 7 9v2.500z" fill="#f4f4f4" stroke="#333b46" />
        </Svg>
      ),
    },
    {
      label: 'Redo',
      keys: 'Ctrl+Y',
      icon: (
        <Svg w={16} h={16}>
          <path d="M15 7L9 2.500v3c-5 0-8 1-7.500 7.500h2C3.500 9.500 5 9 9 9v2.500z" fill="#f4f4f4" stroke="#333b46" />
        </Svg>
      ),
    },
  ],
  [
    {
      label: 'Cut',
      keys: 'Ctrl+X',
      disabled: true,
      icon: (
        <Svg w={16} h={16}>
          <path d="M2 1l10 11M14 1L4 12" stroke="#a9a9a9" strokeWidth="2" />
          <circle cx="3" cy="13" r="2" stroke="#a0a0a0" />
          <circle cx="13" cy="13" r="2" stroke="#a0a0a0" />
        </Svg>
      ),
    },
    {
      label: 'Copy',
      keys: 'Ctrl+C',
      disabled: true,
      icon: (
        <Svg w={16} h={16}>
          <path d="M.5.500h7l2 2v10h-9z" fill="#f3f3f3" stroke="#ababab" />
          <path d="M6.500 4.500h6l3 3v8h-9z" fill="#f3f3f3" stroke="#ababab" />
        </Svg>
      ),
    },
    {
      label: 'Paste',
      keys: 'Ctrl+V',
      icon: (
        <Svg w={16} h={16}>
          <path d="M1.500 2.500h11v12h-11z" fill="#a8a294" stroke="#444" />
          <path d="M4.500.500h5v3h-5z" fill="#ddd" stroke="#444" />
          <path d="M6.500 5.500h6l3 3v7h-9z" fill="#f2f5f9" stroke="#333b46" />
        </Svg>
      ),
    },
  ],
  [{ label: 'Show/Hide Palettes', sub: true, active: true }],
  [
    {
      label: 'Delete',
      disabled: true,
      icon: (
        <Svg w={16} h={16}>
          <path d="M4 9l8-7.500 3.500-.5-1 4-7 8-4-1z" fill="#c6c6c6" stroke="#999" />
          <path d="M0 15.500h4M8 15.500h8" stroke="#999" />
        </Svg>
      ),
    },
  ],
  [{ label: 'Draw Order', disabled: true, sub: true }],
  [{ label: 'Show Grid', disabled: true }],
  [{ label: 'Options', sub: true }],
];

function ContextMenu() {
  return (
    <div role="menu" aria-label="Canvas menu" className="absolute top-[488px] left-[393px] w-[228px] border border-[#979797] bg-[#f0f0f0] p-0.5 shadow-[3px_3px_3px_#00000088]">
      <div className="absolute inset-y-0.5 left-7 w-0.5 border-r border-l border-r-white border-l-[#e2e3e3]" />
      {menuGroups.map((group, index) => (
        <div key={index}>
          {index > 0 && <div className="relative my-[3px] ml-7 h-0.5 border-t border-b border-t-[#dfdfdf] border-b-white" />}
          {group.map((item) => (
            <button
              key={item.label}
              type="button"
              role="menuitem"
              disabled={item.disabled}
              className={`relative flex h-[22px] w-full items-center rounded-[3px] border pr-[7px] pl-0.5 ${
                item.active ? 'border-[#aecff7] bg-linear-to-b from-[#eef2f8] to-[#e3ebf6]' : 'border-transparent'
              } ${item.disabled ? 'text-[#808080]' : 'text-black'}`}
            >
              <span className="flex w-[29px]">{item.icon}</span>
              <span className="flex-1 text-left">{item.label}</span>
              {item.keys && <span className="mr-2.5">{item.keys}</span>}
              {item.sub && (
                <Svg w={5} h={7}>
                  <path d="M0 0l4 3.500L0 7z" fill="currentColor" />
                </Svg>
              )}
            </button>
          ))}
        </div>
      ))}
    </div>
  );
}

function PaletteMenu() {
  return (
    <div role="menu" aria-label="Show/Hide Palettes" className="absolute top-[644px] left-[615px] w-[256px] border border-[#979797] bg-[#f0f0f0] p-0.5 shadow-[3px_3px_3px_#00000088]">
      <div className="absolute inset-y-0.5 left-7 w-0.5 border-r border-l border-r-white border-l-[#e2e3e3]" />
      {['Symbol Libraries', 'Fill Libraries', 'Layers', 'My Settings'].map((name) => (
        <button
          key={name}
          type="button"
          role="menuitemcheckbox"
          aria-checked="true"
          className={`relative flex h-[22px] w-full items-center gap-2.5 rounded-[3px] border ${
            name === 'Fill Libraries' ? 'border-[#aecff7] bg-linear-to-b from-[#f0f3f8] to-[#e5ecf6]' : 'border-transparent'
          }`}
        >
          <span className="-my-px -ml-px flex size-[22px] items-center justify-center rounded-[3px] border border-[#aecff7] bg-[#edf2f9]">
            <Svg w={10} h={11}>
              <path d="M1 6l3 3.500L8.500 1" stroke="#0c12a1" strokeWidth="1.800" />
            </Svg>
          </span>
          {name}
        </button>
      ))}
      <div className="relative my-[3px] ml-7 h-0.5 border-t border-b border-t-[#dfdfdf] border-b-white" />
      <button type="button" role="menuitem" className="flex h-[22px] w-full items-center pl-8">
        Restore Default Display Settings
      </button>
    </div>
  );
}

/* ---------- Bottom controls ---------- */

function ModePanel() {
  return (
    <div className="flex h-[94px] w-[126px] gap-1.5 rounded-md border-2 border-[#8c8c8c] bg-[#f0f0f0] py-0.5 pr-px pl-1.5 text-[#444]">
      <button type="button" className="flex w-[54px] flex-col items-center rounded-md border-2 border-[#2f7df0] bg-[#b0d0fc] pt-0.5 leading-4">
        <Svg w={44} h={44}>
          <path d="M.5.500h43v43H.5z" fill="#fff" stroke="#333" />
          <path d="M11 1v42M22 1v42M33 1v42M1 11h42M1 22h42M1 33h42" stroke="#cfdde4" />
          <path d="M6.500 15.500h22v22h-22z" stroke="#222" />
          <path d="M6.500 4v7M28.500 4v7M7 7.500h21M33 16.500h7M33 37.500h7M36.500 17v20" stroke="#222" />
          <path d="M7 7.500l4-2.500v5zM28 7.500L24 5v5zM36.500 17l-2.500 4h5zM36.500 37l-2.500-4h5z" fill="#222" />
          <g fill="#fff" stroke="#2c49a8">
            <circle cx="6.500" cy="15.500" r="2" />
            <circle cx="28.500" cy="15.500" r="2" />
            <circle cx="6.500" cy="37.500" r="2" />
            <circle cx="28.500" cy="37.500" r="2" />
          </g>
        </Svg>
        <span className="mt-1">Viewport</span>
        <span>Mode</span>
      </button>
      <button type="button" className="flex w-[54px] flex-col items-center border-2 border-transparent pt-0.5 leading-4">
        <Svg w={44} h={44}>
          <path d="M.5.500h43v31l-12 12H.5z" fill="#f8f8f8" stroke="#333" />
          <path d="M31.500 43.500v-12h12z" fill="#bbb" stroke="#444" />
          <path d="M1 11.500c6-1 7 6 0 6.500" stroke="#999" />
          <circle cx="13.500" cy="12.500" r="3.500" stroke="#777" />
          <circle cx="24.500" cy="17.500" r="4.500" stroke="#777" />
          <path d="M6 21c5-3 9 1 15 3 7 2 8 8 3 12-6 5-14 6-18 1-3-4 2-6 0-9-2-4-3-5 0-7z" stroke="#777" />
          <path d="M29 20l2-5 10-10 3 3-10 10z" fill="#3d6fe0" stroke="#1b2a66" />
          <path d="M40 6l2-2 3 3-2 2z" fill="#223" />
        </Svg>
        <span className="mt-1">Sketch</span>
        <span>Overlay</span>
      </button>
    </div>
  );
}

function Bulb({ w, h }: { w: number; h: number }) {
  return (
    <svg width={w} height={h} viewBox="0 0 20 30" fill="none" className="shrink-0" aria-hidden="true">
      <path d="M10 1C4.500 1 1 5 1 9.500 1 14 5.500 16 6 21h8c.5-5 5-7 5-11.500C19 5 15.500 1 10 1z" fill="#fde58a" stroke="#7a6636" strokeWidth="1.200" />
      <path d="M5 5c3-3 7-2 9 0 2 4-1 8-4 9-4-1-7-5-5-9z" fill="#fffbe0" />
      <path d="M6 21.500h8v4l-2 3H8l-2-3z" fill="#b9bcc2" stroke="#333" />
      <path d="M6 24h8" stroke="#333" />
    </svg>
  );
}

function OverlaySlider() {
  return (
    <div className="flex h-[34px] w-40 rounded-[5px] border-2 border-[#999] bg-[#f0f0f0] pr-2.5 pl-[3px] text-[#555]">
      <div className="flex w-[22px] items-center">
        <Bulb w={14} h={21} />
      </div>
      <div className="relative flex-1">
        <input
          type="range"
          aria-label="Overlay brightness"
          defaultValue="19"
          className="absolute top-0.5 h-3.5 w-full appearance-none bg-transparent [&::-webkit-slider-runnable-track]:h-1 [&::-webkit-slider-runnable-track]:rounded-full [&::-webkit-slider-runnable-track]:border [&::-webkit-slider-runnable-track]:border-[#b5b5b5] [&::-webkit-slider-runnable-track]:bg-[#f4f4f4] [&::-webkit-slider-thumb]:-mt-[6px] [&::-webkit-slider-thumb]:size-3.5 [&::-webkit-slider-thumb]:appearance-none [&::-webkit-slider-thumb]:rounded-full [&::-webkit-slider-thumb]:border [&::-webkit-slider-thumb]:border-[#777] [&::-webkit-slider-thumb]:bg-[#c4c4c4]"
        />
        <div className="flex justify-between pt-4 leading-4">
          <span>0%</span>
          <span>100%</span>
        </div>
      </div>
    </div>
  );
}

function HelpBar() {
  return (
    <div className="flex h-[42px] items-stretch overflow-hidden rounded border-2 border-[#999] bg-[#fafafae0]">
      <button type="button" aria-label="Expand" className="flex w-[13px] items-center justify-end">
        <Svg w={9} h={9}>
          <path d="M0 0l9 4.500L0 9z" fill="#444" />
        </Svg>
      </button>
      <button type="button" aria-label="Getting started" className="flex w-10 items-center justify-center">
        <Svg w={32} h={32}>
          <path d="M2.500 4.500l2-1h9l2.500 1.500 2.500-1.500h9l2 1v17H18l-2 1-2-1H2.500z" fill="#f2f6fb" stroke="#35507a" strokeWidth="1.200" />
          <path d="M16 5v17" stroke="#35507a" />
          <path d="M5 7.500h8M5 10.500h3M5 13.500h3M19 7.500h8M19 18.500h8" stroke="#7794bf" />
          <path d="M19 10h8v6h-8z" fill="#bcd0ea" stroke="#7794bf" />
          <path d="M10.500 11.500v16l4-3.500 3 7 3-1.500-3-6.500h5z" fill="#fff" stroke="#333" />
        </Svg>
      </button>
      <button type="button" aria-label="Information" className="flex w-11 items-center justify-center">
        <Svg w={30} h={32}>
          <path d="M1.500 9.500h4v-5l4 4.500h19v19h-27z" fill="#fdfdfd" stroke="#222" />
          <circle cx="15.500" cy="18.500" r="7" fill="#2f7df0" stroke="#1c59bd" />
          <text x="15.500" y="23" textAnchor="middle" fill="#fff" className="font-['Liberation_Serif',serif] text-[14px] font-bold">i</text>
        </Svg>
      </button>
      <button type="button" aria-label="Samples" className="flex w-[42px] items-center justify-center">
        <Svg w={30} h={32}>
          <path d="M8 5l4-2h9v11l-4 3H8z" fill="#e8b878" stroke="#a8773a" strokeWidth=".8" />
          <path d="M7.500 5.500h11v11h-11z" fill="#d9343a" stroke="#edc488" strokeWidth="2" />
          <path d="M13 8l3 6h-6z" fill="#fff" />
          <path d="M15 17l3-2h11v10l-3 3H15z" fill="#edc488" stroke="#a8773a" strokeWidth=".8" />
          <path d="M17.500 18.500h8v7h-8z" fill="#fff" stroke="#2b56c4" strokeWidth="3" />
          <path d="M1.500 18l12-2 3 11-10 3-4-2z" fill="#edc488" stroke="#a8773a" />
          <path d="M5 19l8-1 1 8-8 1.500z" fill="#f9cf2f" />
          <circle cx="9.500" cy="22.500" r="2.500" fill="#fff3b0" />
        </Svg>
      </button>
      <button type="button" aria-label="Tips" className="flex w-[42px] items-center justify-center pb-1">
        <Bulb w={20} h={30} />
      </button>
      <button type="button" aria-label="Help" className="flex w-[34px] items-center justify-center">
        <Svg w={24} h={32}>
          <path d="M6 10c0-7 13-7 12 0 0 4-6 4-6 9" stroke="#3e4046" strokeWidth="5" />
          <path d="M6 9.500c0-6.500 13-6.500 12 .5 0 4-6 4-6 8.500" stroke="#d3d5d9" strokeWidth="2.600" />
          <circle cx="12" cy="25" r="2.800" fill="#d3d5d9" stroke="#3e4046" strokeWidth="1.300" />
        </Svg>
      </button>
      <div className="w-[17px] bg-[#b5c0cf]" />
    </div>
  );
}

export default function App() {
  return (
    <div className="flex h-screen min-h-[920px] flex-col overflow-hidden bg-[linear-gradient(90deg,#454a64_0%,#3c4c80_40%,#171d45_50%,#0a0e2c_80%,#2a2d45_100%)] px-2 pb-2 font-['Open_Sans','Noto_Sans',sans-serif] text-[11px] text-black shadow-[inset_0_0_0_2px_#05061a,inset_0_0_0_3px_#8b90a8]">
      <TitleBar />
      <main className="relative flex flex-1 flex-col bg-white shadow-[0_0_0_1px_#9096ad]">
        <Drawing />
        {/* Toolbars */}
        <div className="relative flex items-start gap-1 px-1 pt-1.5">
          <ToolPanel tools={drawTools} className="w-[598px] px-1" />
          <ToolPanel tools={clipboardTools} className="w-[132px] px-[3px]" />
          <ToolPanel tools={shareTools} className="w-[134px] pr-1 pl-0.5" />
          <StylePanel />
          <button type="button" aria-label="Hide toolbars" className="mt-0.5 mr-1.5 ml-auto">
            <CloseDot color="#4c5263" cross="#fff" />
          </button>
        </div>
        {/* Bottom controls */}
        <div className="relative mt-auto mb-2.5 flex items-end gap-2 pl-2.5">
          <ModePanel />
          <OverlaySlider />
          <div className="mr-80 mb-1.5 ml-auto">
            <HelpBar />
          </div>
        </div>
        <Palettes />
        <ContextMenu />
        <PaletteMenu />
        {/* Watermark */}
        <div className="pointer-events-none absolute top-[620px] left-[570px] flex flex-col items-center font-['Liberation_Serif',serif] text-white/60 [text-shadow:1px_1px_1px_#00000030]">
          <span className="text-[22px] leading-6">
            SOFTPEDIA<sup className="text-[8px]">™</sup>
          </span>
          <span className="leading-6">www.softpedia.com</span>
        </div>
      </main>
    </div>
  );
}
